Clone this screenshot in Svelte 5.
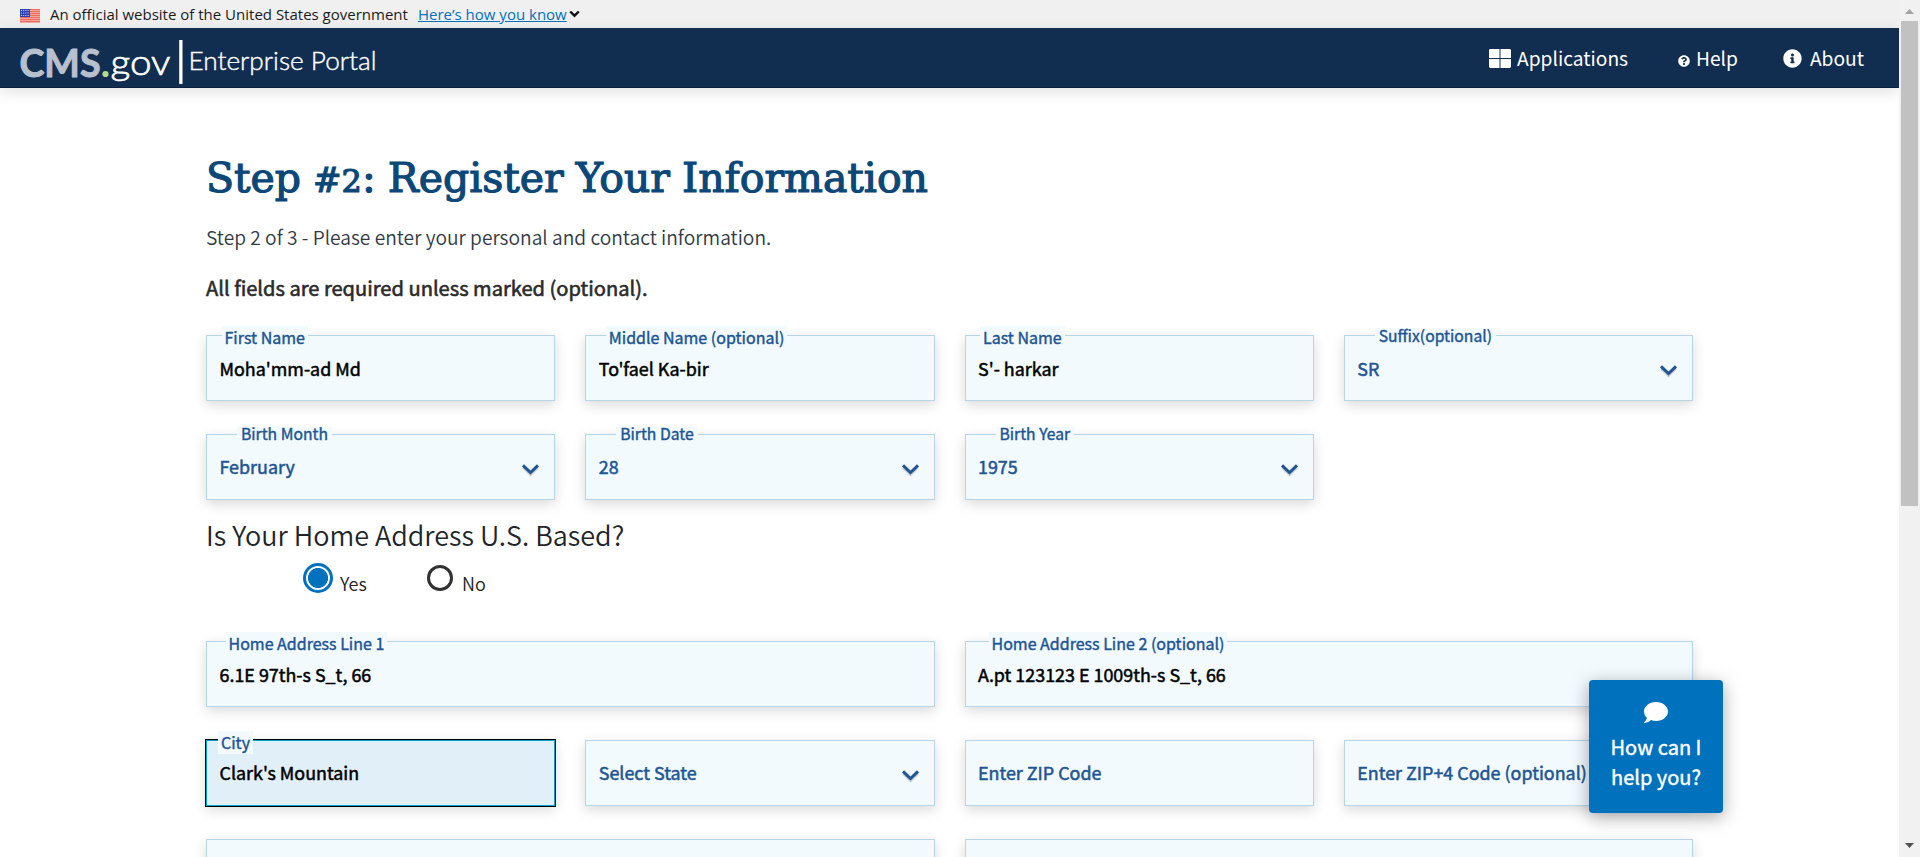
<script>
  const rows = [
    [
      { label: 'First Name', value: "Moha'mm-ad Md", inset: 14.5 },
      { label: 'Middle Name (optional)', value: "To'fael Ka-bir", inset: 19.5 },
      { label: 'Last Name', value: "S'- harkar", inset: 14.5 },
      { label: 'Suffix(optional)', value: 'SR', select: true, inset: 30, low: true }
    ],
    [
      { label: 'Birth Month', value: 'February', select: true, inset: 30 },
      { label: 'Birth Date', value: '28', select: true, inset: 30 },
      { label: 'Birth Year', value: '1975', select: true, inset: 30 }
    ]
  ];
  const address = [
    [
      { label: 'Home Address Line 1', value: '6.1E 97th-s S_t, 66', inset: 18.5, wide: true },
      { label: 'Home Address Line 2 (optional)', value: 'A.pt 123123 E 1009th-s S_t, 66', inset: 23, wide: true }
    ],
    [
      { label: 'City', value: "Clark's Mountain", inset: 11, focused: true },
      { value: 'Select State', select: true },
      { value: 'Enter ZIP Code', empty: true },
      { value: 'Enter ZIP+4 Code (optional)', empty: true }
    ],
    [
      { value: '', wide: true },
      { value: '', wide: true }
    ]
  ];
</script>

{#snippet field(f)}
  <div class="field" class:wide={f.wide} class:focused={f.focused} class:blue={f.select || f.empty}>
    {#if f.label}
      <span class="label" class:select-label={f.select} class:low={f.low} style="left: {f.inset}px">{f.label}</span>
    {/if}
    <span class="value">{f.value}</span>
    {#if f.select}
      <svg class="chevron" width="19" height="14" viewBox="0 0 19 14">
        <path d="M2.5 4.5 9.5 11.5 16.5 4.5" fill="none" stroke="#c3c9ce" stroke-width="3" />
        <path d="M2 2.3 9.5 9.5 17 2.3" fill="none" stroke="#205493" stroke-width="3" />
      </svg>
    {/if}
  </div>
{/snippet}

<div class="page">
  <div class="main">
    <div class="banner">
      <svg class="flag" width="20" height="14" viewBox="0 0 20 14">
        <rect width="20" height="14" fill="#fff" />
        {#each [0, 2, 4, 6, 8, 10, 12] as y}
          <rect y={y + 0.2} width="20" height="1.3" fill="#ec4a38" />
        {/each}
        <rect width="10" height="8" fill="#2a3fb5" />
        {#each [1.5, 4, 6.5] as y}
          <path d="M1 {y}h8" stroke="#dfe4ff" stroke-width="1" stroke-dasharray="1 1.2" />
        {/each}
      </svg>
      <span class="official">An official website of the United States government</span>
      <a class="how" href="#top">Here’s how you know</a>
      <svg width="11" height="8" viewBox="0 0 11 8"><path d="M1.2 1.5 5.5 5.7 9.8 1.5" fill="none" stroke="#111" stroke-width="2.4" /></svg>
    </div>

    <header>
      <svg class="logo" width="380" height="60" viewBox="0 0 380 60">
        <g font-family="Lato, sans-serif">
          <text x="19.500" y="48.5" font-size="38.5" font-weight="700" fill="#b8c0cd" stroke="#b8c0cd" stroke-width="1" textLength="81" lengthAdjust="spacingAndGlyphs">CMS</text>
          <circle cx="105.5" cy="46" r="3.1" fill="#b5dc8e" />
          <text x="110.5" y="46.5" font-size="36" font-weight="300" fill="#fff" stroke="#fff" stroke-width="0.7" textLength="60" lengthAdjust="spacingAndGlyphs">gov</text>
          <rect x="179.2" y="12" width="3.3" height="44" fill="#fff" />
          <text x="188.5" y="42" font-size="25.5" font-weight="300" fill="#fff" stroke="#fff" stroke-width="0.4" textLength="188" lengthAdjust="spacingAndGlyphs">Enterprise Portal</text>
        </g>
      </svg>
      <nav>
        <a class="apps" href="#apps">
          <svg width="22" height="19" viewBox="0 0 22 19"><path d="M1 0h9.5v9H0V1zM11.5 0H21l1 1v8H11.5zM0 10h10.5v9H1l-1-1zM11.5 10H22v8l-1 1h-9.5z" fill="#fff" /></svg>
          <span>Applications</span>
        </a>
        <a class="help" href="#help">
          <svg width="12" height="12" viewBox="0 0 512 512"><path fill="#fff" d="M504 256c0 137-111 248-248 248S8 393 8 256 119 8 256 8s248 111 248 248zM262.7 90c-54.500 0-89.300 23-116.500 63.800-3.500 5.300-2.400 12.400 2.700 16.300l34.700 26.300c5.200 3.900 12.600 3 16.700-2.100 17.900-22.700 30.100-35.800 57.300-35.800 20.400 0 45.700 13.100 45.700 33 0 15-12.400 22.700-32.500 34C247.100 238.500 216 254.900 216 296v4c0 6.600 5.400 12 12 12h56c6.600 0 12-5.400 12-12v-1.300c0-28.500 83.200-29.600 83.200-106.700 0-58-60.200-102-116.500-102zM256 338c-25.400 0-46 20.600-46 46s20.600 46 46 46 46-20.600 46-46-20.600-46-46-46z" /></svg>
          <span>Help</span>
        </a>
        <a class="about" href="#about">
          <svg width="21" height="21" viewBox="0 0 512 512"><path fill="#fff" d="M256 8C119 8 8 119 8 256s111 248 248 248 248-111 248-248S393 8 256 8zm0 110c23.200 0 42 18.800 42 42s-18.800 42-42 42-42-18.800-42-42 18.800-42 42-42zm56 254c0 6.600-5.400 12-12 12h-88c-6.600 0-12-5.400-12-12v-24c0-6.600 5.400-12 12-12h12v-64h-12c-6.600 0-12-5.400-12-12v-24c0-6.600 5.400-12 12-12h64c6.600 0 12 5.400 12 12v100h12c6.600 0 12 5.400 12 12v24z" /></svg>
          <span>About</span>
        </a>
      </nav>
    </header>

    <main>
      <h1>Step <span class="hash">#</span><span class="old">2</span>: Register Your Information</h1>
      <p class="intro">Step 2 of 3 - Please enter your personal and contact information.</p>
      <p class="required">All fields are required unless marked (optional).</p>

      {#each rows as row, i}
        <div class="row" class:raised={i === 1}>{#each row as f}{@render field(f)}{/each}</div>
      {/each}

      <h2>Is Your Home Address U.S. Based?</h2>
      <div class="radios">
        <span class="radio on"></span><span class="yes">Yes</span>
        <span class="radio"></span><span class="no">No</span>
      </div>

      {#each address as row, i}
        <div class="row" class:raised={i === 1}>{#each row as f}{@render field(f)}{/each}</div>
      {/each}
    </main>
  </div>

  <div class="scrollbar">
    <svg width="9" height="5" viewBox="0 0 9 5"><path d="M0 5 4.500 0 9 5z" fill="#a3a3a3" /></svg>
    <div class="thumb"></div>
    <svg class="down" width="9" height="5" viewBox="0 0 9 5"><path d="M0 0h9L4.500 5z" fill="#505050" /></svg>
  </div>

  <button class="chat">
    <svg width="24" height="21" viewBox="0 0 24 21"><path d="M12 0c6.600 0 12 4.200 12 9.500S18.600 19 12 19c-1.800 0-3.500-.3-5-.9C5.300 19.800 2.800 21 .4 20.900c-.4-.1-.4-.5-.1-.8C1.600 19 2.500 17.500 2.900 15.800 1.100 14.100 0 11.900 0 9.500 0 4.200 5.400 0 12 0z" fill="#fff" /></svg>
    <span>How can I<br />help you?</span>
  </button>
</div>

<style>
  :global(body) {
    margin: 0;
    overflow: hidden;
  }
  .page {
    display: flex;
    width: 1920px;
    height: 857px;
    overflow: hidden;
    position: relative;
    background: #fff;
    font-family: 'Noto Sans CJK SC', 'Noto Sans', sans-serif;
    color: #323a45;
  }
  .main {
    width: 1899px;
    height: 857px;
    overflow: hidden;
  }
  .banner {
    height: 28px;
    display: flex;
    align-items: center;
    padding-left: 20px;
    background: #f0f0f0;
    font-family: 'Open Sans', sans-serif;
    font-size: 15px;
    line-height: 28px;
    color: #1b1b1b;
    white-space: nowrap;
  }
  .flag {
    margin: 4px 10px 0 0;
  }
  .official {
    width: 358px;
  }
  .how {
    width: 149px;
    margin: 0 2px 0 10px;
    color: #0071bc;
    text-decoration: underline;
  }
  header {
    display: flex;
    justify-content: space-between;
    height: 60px;
    box-sizing: border-box;
    background: #112e51;
    border-bottom: 1px solid #0b2341;
    box-shadow: 0 4px 14px rgba(0, 0, 0, 0.12);
  }
  nav {
    display: flex;
    height: 60px;
    padding-right: 35px;
  }
  nav a {
    display: flex;
    align-items: center;
    color: #fff;
    text-decoration: none;
    font-size: 19.2px;
    line-height: 61px;
    white-space: nowrap;
  }
  .apps {
    width: 189px;
    gap: 6px;
  }
  .help {
    width: 105px;
    gap: 6px;
  }
  .help svg {
    margin-top: 6px;
  }
  .about {
    width: 81px;
    gap: 8px;
  }
  main {
    width: 1487px;
    padding: 62px 0 0 206px;
  }
  h1 {
    margin: 0;
    font-family: 'DejaVu Serif', serif;
    font-weight: 400;
    font-size: 41px;
    line-height: 56px;
    word-spacing: -1px;
    color: #0b4778;
    -webkit-text-stroke: 1.2px #0b4778;
    white-space: nowrap;
  }
  .hash {
    font-size: 34px;
  }
  .old {
    font-size: 32px;
  }
  p {
    margin: 0;
    white-space: nowrap;
  }
  .intro {
    margin-top: 13px;
    font-size: 19.2px;
    font-weight: 350;
    line-height: 30px;
    color: #323a45;
  }
  .required {
    margin: 19px 0 31px;
    font-size: 20.1px;
    line-height: 33px;
    color: #2b2b2b;
    -webkit-text-stroke: 0.6px #2b2b2b;
  }
  .row {
    display: grid;
    grid-template-columns: repeat(4, 1fr);
    gap: 30px;
    margin-bottom: 33px;
  }
  .field {
    position: relative;
    display: flex;
    justify-content: space-between;
    align-items: center;
    box-sizing: border-box;
    height: 66px;
    padding: 0 14px 0 12.5px;
    border: 1px solid #b5d6ea;
    background: #f2fafd;
    box-shadow: 0 4px 12px rgba(0, 0, 0, 0.15);
  }
  .wide {
    grid-column: span 2;
  }
  .focused {
    border-color: #00a6d2;
    background: #e1eff8;
    outline: 1px solid #000;
  }
  .value {
    font-size: 17.9px;
    line-height: 64px;
    color: #000;
    -webkit-text-stroke: 0.5px currentColor;
    white-space: nowrap;
  }
  .raised .value {
    line-height: 62px;
    margin-bottom: 2px;
  }
  .blue .value {
    color: #205493;
  }
  .label {
    position: absolute;
    top: -10px;
    height: 23px;
    padding: 0 3px;
    background: #f2fafd;
    font-size: 16px;
    line-height: 23px;
    color: #205493;
    -webkit-text-stroke: 0.4px #205493;
    white-space: nowrap;
  }
  .select-label {
    top: -8px;
    height: 14px;
    padding: 0 4px;
    font-size: 15.7px;
    line-height: 14px;
  }
  .low {
    line-height: 16px;
  }
  .chevron {
    margin-top: 6px;
  }
  h2 {
    margin: -18px 0 0;
    font-size: 26.950px;
    font-weight: 350;
    line-height: 40px;
    color: #212529;
    white-space: nowrap;
  }
  .radios {
    display: flex;
    align-items: center;
    height: 30px;
    margin: 8px 0 48px;
    padding-left: 97px;
    font-size: 18px;
    font-weight: 350;
    line-height: 30px;
    color: #212121;
  }
  .radio {
    box-sizing: border-box;
    width: 26px;
    height: 26px;
    border: 3px solid #323232;
    border-radius: 50%;
  }
  .radio.on {
    width: 30px;
    height: 30px;
    border: 3px solid #0071bc;
    background: radial-gradient(circle, #0071bc 9.700px, #fff 10.300px);
  }
  .yes {
    width: 87px;
    padding: 10px 0 0 7px;
  }
  .no {
    padding: 10px 0 0 9px;
  }
  .scrollbar {
    width: 21px;
    height: 857px;
    box-sizing: border-box;
    padding: 9px 0;
    display: flex;
    flex-direction: column;
    align-items: center;
    background: #f1f1f1;
  }
  .thumb {
    width: 17px;
    height: 485px;
    margin-top: 7px;
    background: #c1c1c1;
  }
  .down {
    margin-top: auto;
  }
  .chat {
    position: absolute;
    left: 1589px;
    top: 680px;
    width: 134px;
    height: 133px;
    display: flex;
    flex-direction: column;
    align-items: center;
    padding: 22px 0 0;
    gap: 9px;
    border: 0;
    border-radius: 4px;
    background: #0071bc;
    box-shadow: 0 4px 18px rgba(0, 0, 0, 0.35);
    color: #fff;
    font-family: inherit;
    font-size: 20px;
    line-height: 30px;
    -webkit-text-stroke: 0.4px #fff;
  }
</style>
